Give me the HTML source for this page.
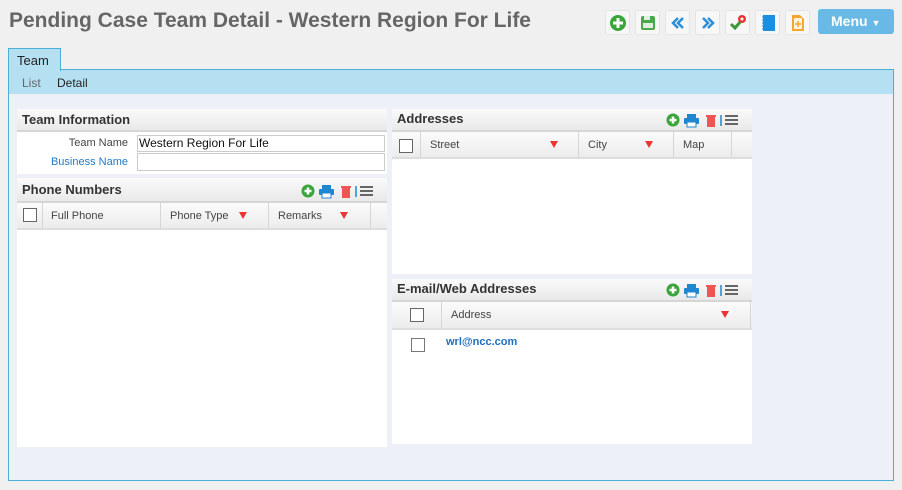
<!DOCTYPE html>
<html><head><meta charset="utf-8"><style>
*{box-sizing:border-box;margin:0;padding:0}
body{width:902px;height:490px;background:#f0f0f0;font-family:"Liberation Sans",sans-serif;position:relative;overflow:hidden;font-size:12px;color:#333}
.a{position:absolute}
.btn{position:absolute;top:10px;width:25px;height:25px;border:1px solid #e4e4e4;border-radius:3px;background:#f7f7f7}
.btn svg{position:absolute;left:3px;top:3px}
.hdr{position:absolute;background:linear-gradient(#fafafa,#e9e9e9);border-bottom:2px solid #d6d6d6;font-weight:bold;font-size:13px;color:#333;padding-left:5px}
.gh{position:absolute;background:linear-gradient(#fbfbfb,#ececec);border-bottom:2px solid #ddd;font-size:11px;color:#444}
.gh div{position:absolute;top:0;bottom:0;border-right:1px solid #d6d6d6;padding-left:9px;line-height:27px}
.cb{position:absolute;width:14px;height:14px;border:1px solid #666;background:#fff}
.flt{position:absolute;width:0;height:0;border-left:4px solid transparent;border-right:4px solid transparent;border-top:7px solid #e33}
.white{position:absolute;background:#fff}
</style></head><body>
<div class="a" style="left:9px;top:9px;font-size:21px;font-weight:bold;color:#666">Pending Case Team Detail - Western Region For Life</div>

<div class="btn" style="left:605px"><svg width="18" height="18"><circle cx="9" cy="9" r="8" fill="#3aa63a"/><path d="M9 4v10M4 9h10" stroke="#fff" stroke-width="3"/></svg></div>
<div class="btn" style="left:635px"><svg width="18" height="18"><rect x="2" y="2" width="14" height="14" rx="2" fill="#4aa84a"/><rect x="5" y="2" width="6" height="4" fill="#e0f0e0"/><rect x="4" y="9" width="10" height="5" fill="#e0f0e0"/></svg></div>
<div class="btn" style="left:665px"><svg width="18" height="18"><path d="M9 4 4 9l5 5M14 4 9 9l5 5" stroke="#2b8ed6" stroke-width="2.5" fill="none"/></svg></div>
<div class="btn" style="left:695px"><svg width="18" height="18"><path d="M4 4l5 5-5 5M9 4l5 5-5 5" stroke="#2b8ed6" stroke-width="2.5" fill="none"/></svg></div>
<div class="btn" style="left:725px"><svg width="18" height="18"><path d="M2 10l4 4 6-7" stroke="#3a9a3a" stroke-width="3" fill="none"/><circle cx="13" cy="5" r="4" fill="#e33"/><circle cx="13" cy="5" r="1.5" fill="#fff"/></svg></div>
<div class="btn" style="left:755px"><svg width="18" height="18"><rect x="4" y="1" width="12" height="16" fill="#1a8ee0"/><path d="M3 3h2M3 6h2M3 9h2M3 12h2M3 15h2" stroke="#1a8ee0"/></svg></div>
<div class="btn" style="left:785px"><svg width="18" height="18"><path d="M3 1h8l4 4v12H3z" fill="#f6a530"/><rect x="5" y="4" width="8" height="11" fill="#fff3dd"/><path d="M9 7v6M6 10h6" stroke="#f6a530" stroke-width="1.5"/></svg></div>
<div class="a" style="left:818px;top:9px;width:76px;height:25px;background:#68b9e6;border-radius:3px;color:#fff;font-weight:bold;font-size:14px;line-height:25px;padding-left:13px">Menu <span style="font-size:9px">▼</span></div>

<div class="a" style="left:8px;top:69px;width:886px;height:412px;border:1px solid #4ab0d8;background:#eef0f8"></div>
<div class="a" style="left:9px;top:70px;width:884px;height:24px;background:#b4e0f2"></div>
<div class="a" style="left:8px;top:48px;width:53px;height:23px;border:1px solid #4ab0d8;border-bottom:none;background:#b4e0f2;font-size:13px;padding:4px 0 0 8px;color:#222">Team</div>
<div class="a" style="left:22px;top:76px;font-size:12px;color:#666">List</div>
<div class="a" style="left:57px;top:76px;font-size:12px;color:#222">Detail</div>

<div class="hdr" style="left:17px;top:109px;width:370px;height:23px;line-height:22px">Team Information</div>
<div class="white" style="left:17px;top:132px;width:370px;height:42px"></div>
<div class="a" style="left:20px;top:137px;width:108px;text-align:right;font-size:11px;color:#444">Team Name</div>
<div class="a" style="left:20px;top:156px;width:108px;text-align:right;font-size:11px;color:#1f7ac8">Business Name</div>
<div class="a" style="left:137px;top:135px;width:248px;height:17px;border:1px solid #ccc;background:#fff;font-size:12px;padding-left:1px;line-height:15px;color:#111">Western Region For Life</div>
<div class="a" style="left:137px;top:153px;width:248px;height:18px;border:1px solid #ccc;background:#fff"></div>

<div class="hdr" style="left:17px;top:178px;width:370px;height:25px;line-height:23px">Phone Numbers</div>
<div class="white" style="left:17px;top:229px;width:370px;height:218px"></div>
<div class="gh" style="left:17px;top:203px;width:370px;height:27px">
<div style="left:0;width:26px"></div><div style="left:26px;width:118px;padding-left:8px">Full Phone</div><div style="left:144px;width:108px">Phone Type</div><div style="left:252px;width:102px">Remarks</div></div>
<div class="cb" style="left:23px;top:208px"></div>
<div class="flt" style="left:239px;top:212px"></div><div class="flt" style="left:340px;top:212px"></div>

<div class="hdr" style="left:392px;top:109px;width:360px;height:23px;line-height:20px">Addresses</div>
<div class="gh" style="left:392px;top:132px;width:360px;height:27px">
<div style="left:0;width:29px"></div><div style="left:29px;width:158px">Street</div><div style="left:187px;width:95px">City</div><div style="left:282px;width:58px">Map</div></div>
<div class="cb" style="left:399px;top:139px"></div>
<div class="flt" style="left:550px;top:141px"></div><div class="flt" style="left:645px;top:141px"></div>
<div class="white" style="left:392px;top:159px;width:360px;height:115px"></div>

<div class="hdr" style="left:392px;top:279px;width:360px;height:23px;line-height:20px">E-mail/Web Addresses</div>
<div class="gh" style="left:392px;top:302px;width:360px;height:28px">
<div style="left:0;width:50px"></div><div style="left:50px;width:309px">Address</div></div>
<div class="cb" style="left:410px;top:308px"></div>
<div class="flt" style="left:721px;top:311px"></div>
<div class="white" style="left:392px;top:330px;width:360px;height:114px"></div>
<div class="cb" style="left:411px;top:338px;border-color:#777"></div>
<div class="a" style="left:446px;top:336px;font-size:11px;font-weight:bold;color:#1f6fc0">wrl@ncc.com</div>

<svg class="a" style="left:300px;top:183px" width="80" height="16"><circle cx="8" cy="8" r="6.5" fill="#3aa63a"/><path d="M8 4.5v7M4.5 8h7" stroke="#fff" stroke-width="2.5"/><rect x="19" y="6" width="15" height="6" rx="1" fill="#1f86d0"/><rect x="22" y="2" width="9" height="4" fill="#1f86d0"/><rect x="22" y="10" width="9" height="5" fill="#fff" stroke="#1f86d0"/><rect x="41" y="3" width="10" height="2" fill="#e55"/><rect x="42" y="5" width="8" height="10" fill="#e55"/><path d="M56 3v11" stroke="#1f86d0" stroke-width="1.5"/><path d="M60 4h13M60 8h13M60 12h13" stroke="#666" stroke-width="2"/></svg>
<svg class="a" style="left:665px;top:112px" width="80" height="16"><circle cx="8" cy="8" r="6.5" fill="#3aa63a"/><path d="M8 4.5v7M4.5 8h7" stroke="#fff" stroke-width="2.5"/><rect x="19" y="6" width="15" height="6" rx="1" fill="#1f86d0"/><rect x="22" y="2" width="9" height="4" fill="#1f86d0"/><rect x="22" y="10" width="9" height="5" fill="#fff" stroke="#1f86d0"/><rect x="41" y="3" width="10" height="2" fill="#e55"/><rect x="42" y="5" width="8" height="10" fill="#e55"/><path d="M56 3v11" stroke="#1f86d0" stroke-width="1.5"/><path d="M60 4h13M60 8h13M60 12h13" stroke="#666" stroke-width="2"/></svg>
<svg class="a" style="left:665px;top:282px" width="80" height="16"><circle cx="8" cy="8" r="6.5" fill="#3aa63a"/><path d="M8 4.5v7M4.5 8h7" stroke="#fff" stroke-width="2.5"/><rect x="19" y="6" width="15" height="6" rx="1" fill="#1f86d0"/><rect x="22" y="2" width="9" height="4" fill="#1f86d0"/><rect x="22" y="10" width="9" height="5" fill="#fff" stroke="#1f86d0"/><rect x="41" y="3" width="10" height="2" fill="#e55"/><rect x="42" y="5" width="8" height="10" fill="#e55"/><path d="M56 3v11" stroke="#1f86d0" stroke-width="1.5"/><path d="M60 4h13M60 8h13M60 12h13" stroke="#666" stroke-width="2"/></svg>
</body></html>
